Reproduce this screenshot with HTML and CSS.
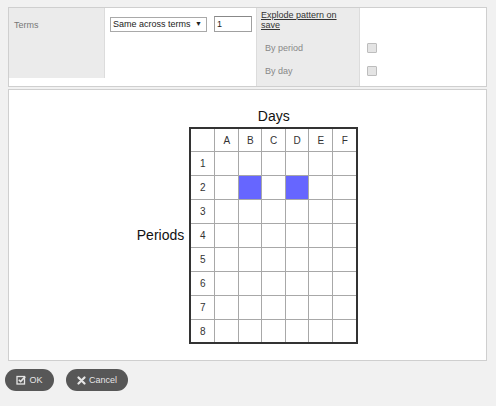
FILE: index.html
```html
<!DOCTYPE html>
<html>
<head>
<meta charset="utf-8">
<link rel="stylesheet" href="styles.css">
</head>
<body>
<div class="panel top">
  <div class="terms-label">Terms</div>
  <div class="controls">
    <span class="select">Same across terms <span class="arrow">&#9660;</span></span>
    <span class="input">1</span>
  </div>
  <div class="explode">
    <div class="ex-head"><a class="ex-link">Explode pattern on save</a></div>
    <div class="ex-blank"></div>
    <div class="ex-label">By period</div>
    <div class="ex-check"><span class="cb"></span></div>
    <div class="ex-label">By day</div>
    <div class="ex-check"><span class="cb"></span></div>
  </div>
</div>

<div class="panel grid-panel">
  <div class="periods">Periods</div>
  <div class="table-wrap">
    <div class="days">Days</div>
    <div class="tbl">
      <div class="c"></div><div class="c">A</div><div class="c">B</div><div class="c">C</div><div class="c">D</div><div class="c">E</div><div class="c">F</div>
      <div class="c">1</div><div class="c"></div><div class="c"></div><div class="c"></div><div class="c"></div><div class="c"></div><div class="c"></div>
      <div class="c">2</div><div class="c"></div><div class="c on"></div><div class="c"></div><div class="c on"></div><div class="c"></div><div class="c"></div>
      <div class="c">3</div><div class="c"></div><div class="c"></div><div class="c"></div><div class="c"></div><div class="c"></div><div class="c"></div>
      <div class="c">4</div><div class="c"></div><div class="c"></div><div class="c"></div><div class="c"></div><div class="c"></div><div class="c"></div>
      <div class="c">5</div><div class="c"></div><div class="c"></div><div class="c"></div><div class="c"></div><div class="c"></div><div class="c"></div>
      <div class="c">6</div><div class="c"></div><div class="c"></div><div class="c"></div><div class="c"></div><div class="c"></div><div class="c"></div>
      <div class="c">7</div><div class="c"></div><div class="c"></div><div class="c"></div><div class="c"></div><div class="c"></div><div class="c"></div>
      <div class="c">8</div><div class="c"></div><div class="c"></div><div class="c"></div><div class="c"></div><div class="c"></div><div class="c"></div>
    </div>
  </div>
</div>

<div class="buttons">
  <span class="btn ok"><svg width="10" height="10" viewBox="0 0 10 10"><rect x="1" y="1.5" width="7.5" height="7.5" fill="none" stroke="#e6e6e6" stroke-width="1.3"/><path d="M2.8 4.8 L4.6 6.6 L9.2 1.6" fill="none" stroke="#e6e6e6" stroke-width="1.6"/></svg>OK</span>
  <span class="btn cancel"><svg width="9" height="9" viewBox="0 0 9 9"><path d="M1.5 1.5 L7.5 7.5 M7.5 1.5 L1.5 7.5" stroke="#e6e6e6" stroke-width="2.2" stroke-linecap="round"/></svg>Cancel</span>
</div>
</body>
</html>
```
FILE: styles.css
```css
html, body {
  margin: 0;
  padding: 0;
  background: #f1f1f1;
  font-family: "Liberation Sans", Arial, sans-serif;
  font-size: 9px;
  color: #333;
}
.panel {
  background: #fff;
  border: 1px solid #cfcfcf;
  margin-left: 8px;
  width: 477px;
}
.top {
  margin-top: 7px;
  height: 78px;
  display: flex;
  align-items: flex-start;
}
.terms-label {
  width: 90px;
  height: 58px;
  padding: 12px 0 0 5px;
  background: #ebebeb;
  border-right: 1px solid #dcdcdc;
  color: #777;
  line-height: 11px;
}
.controls {
  width: 146px;
  padding: 8px 0 0 5px;
  display: flex;
  align-items: center;
  gap: 7px;
}
.select {
  display: inline-block;
  height: 13px;
  line-height: 13px;
  border: 1px solid #a9a9a9;
  padding: 0 4px 0 2px;
  width: 89px;
  white-space: nowrap;
  color: #222;
  font-size: 9px;
}
.arrow { font-size: 7px; margin-left: 2px; position: relative; top: -1px; }
.input {
  display: inline-block;
  width: 34px;
  height: 14px;
  line-height: 14px;
  border: 1px solid #a0a0a0;
  border-top-color: #888;
  padding-left: 2px;
  color: #222;
}
.explode {
  display: grid;
  grid-template-columns: 104px 126px;
  grid-template-rows: 29px 23px 26px;
  height: 78px;
}
.ex-head, .ex-label {
  background: #ebebeb;
  border-left: 1px solid #dcdcdc;
  border-right: 1px solid #dcdcdc;
}
.ex-head {
  padding: 2px 8px 0 4px;
  line-height: 10px;
}
.ex-link { color: #333; text-decoration: underline; }
.ex-label {
  color: #888;
  padding-left: 8px;
  padding-top: 6px;
}
.ex-check { padding: 6px 0 0 7px; }
.cb {
  display: block;
  width: 8px;
  height: 8px;
  border: 1px solid #bdbdbd;
  background: #e4e4e4;
  border-radius: 1px;
}
.grid-panel {
  margin-top: 2px;
  height: 236px;
  padding-top: 18px;
  padding-bottom: 16px;
  display: flex;
  justify-content: center;
  align-items: center;
}
.periods {
  font-size: 14px;
  color: #111;
  margin-right: 5px;
  margin-top: 18px;
}
.table-wrap {
  display: flex;
  flex-direction: column;
  align-items: center;
}
.days {
  font-size: 14px;
  color: #111;
  line-height: 16px;
  margin-bottom: 3px;
}
.tbl {
  display: grid;
  grid-template-columns: 23px 23px 22px 23px 22px 23px 23px;
  grid-template-rows: 22px repeat(7, 23px) 22px;
  gap: 1px;
  background: #a8a8a8;
  border: 2px solid #333;
}
.c {
  background: #fff;
  display: flex;
  align-items: center;
  justify-content: center;
  font-size: 10px;
  color: #333;
}
.c.on { background: #6666ff; }
.buttons {
  display: flex;
  gap: 12px;
  margin: 8px 0 0 5px;
}
.btn {
  display: inline-flex;
  align-items: center;
  justify-content: center;
  gap: 3px;
  height: 22px;
  border-radius: 11px;
  background: #575757;
  color: #e6e6e6;
  font-size: 9px;
}
.ok { width: 49px; }
.cancel { width: 62px; }
```
